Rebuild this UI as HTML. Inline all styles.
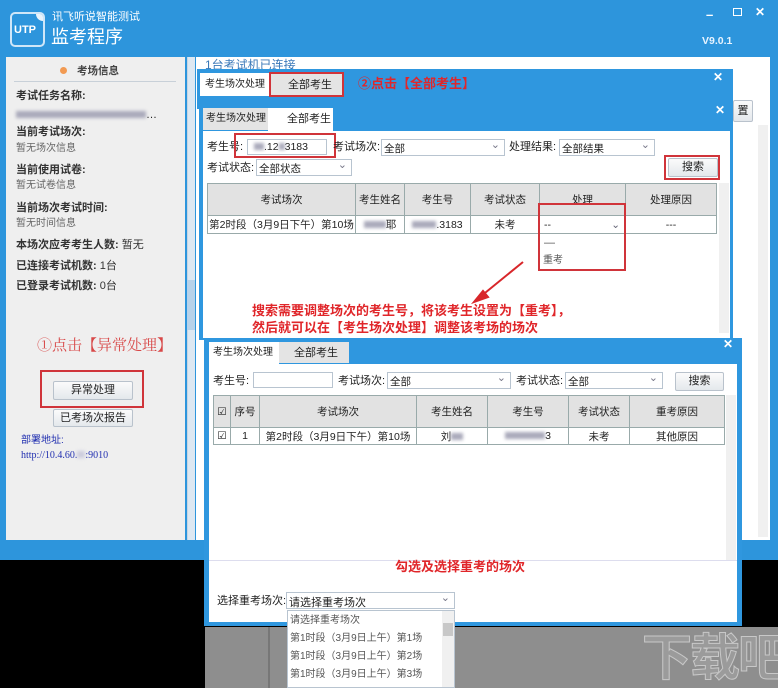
<!DOCTYPE html>
<html><head><meta charset="utf-8"><style>
*{margin:0;padding:0;box-sizing:border-box}
body{width:778px;height:688px;position:relative;overflow:hidden;background:#000;font-family:"Liberation Sans","Noto Sans CJK SC",sans-serif;font-size:11px;color:#222}
.a{position:absolute}
.t{position:absolute;white-space:nowrap;line-height:1}
.inp{position:absolute;background:#fff;border:1px solid #b8c4d0;height:16px}
.sel{position:absolute;background:#fff;border:1px solid #b8c4d0;height:17px;padding:1px 0 0 2px;font-size:10.5px}
.sel:after{content:"⌄";position:absolute;right:4px;top:-2px;color:#778;font-size:11px}
.btn{position:absolute;background:linear-gradient(#fbfbfb,#e4e8ec);border:1px solid #b9c2cc;border-radius:2px;text-align:center;font-size:11px}
.red{position:absolute;border:2px solid #d0343a}
table{border-collapse:collapse;position:absolute;font-size:10.5px}
td{border:1px solid #9aa;text-align:center;white-space:nowrap}
.hd td{background:#e2e2e2}
.rt{color:#e0262a;font-weight:bold;position:absolute;white-space:nowrap;line-height:1}
.blur{display:inline-block;background:#aab;filter:blur(1.5px);height:7px}
.tab{font-size:10px}
</style></head><body>
<!-- main window -->
<div class="a" style="left:0;top:0;width:778px;height:560px;background:#2d95dc"></div>
<div class="a" style="left:10px;top:12px;width:35px;height:35px;border:2px solid #cfe6f8;border-radius:5px"></div>
<div class="t" style="left:14px;top:25px;color:#fff;font-weight:bold;font-size:11px">UTP</div>
<div class="a" style="left:36px;top:14px;width:7px;height:7px;background:#e8f3fc;border-radius:0 3px 0 7px"></div>
<div class="t" style="left:52px;top:12px;color:#fff;font-size:11px">讯飞听说智能测试</div>
<div class="t" style="left:51px;top:28px;color:#fff;font-size:18px">监考程序</div>
<div class="t" style="left:706px;top:8px;color:#fff;font-size:13px;font-weight:bold">–</div>
<div class="a" style="left:733px;top:8px;width:9px;height:8px;border:1.5px solid #fff"></div>
<div class="t" style="left:755px;top:6px;color:#fff;font-size:12px;font-weight:bold">✕</div>
<div class="t" style="left:702px;top:36px;color:#e8f4ff;font-size:10.5px;font-weight:bold">V9.0.1</div>
<!-- left panel -->
<div class="a" style="left:6px;top:57px;width:179px;height:483px;background:#efefef"></div>
<div class="a" style="left:187px;top:57px;width:8px;height:483px;background:#dde8f2;border-left:1px solid #c9d6e2"></div>
<div class="a" style="left:187px;top:280px;width:8px;height:50px;background:#b7d2ea"></div>
<div class="a" style="left:60px;top:67px;width:7px;height:7px;border-radius:50%;background:#f29a52"></div>
<div class="t" style="left:77px;top:66px;font-size:10.5px;font-weight:bold;color:#444">考场信息</div>
<div class="a" style="left:14px;top:81px;width:162px;height:1px;background:#c8d0d8"></div>
<div class="t" style="left:16px;top:91px;font-weight:bold;color:#333">考试任务名称:</div>
<div class="t" style="left:16px;top:110px"><span class="blur" style="width:130px"></span>…</div>
<div class="t" style="left:16px;top:127px;font-weight:bold;color:#333">当前考试场次:</div>
<div class="t" style="left:16px;top:144px;color:#666;font-size:10px">暂无场次信息</div>
<div class="t" style="left:16px;top:165px;font-weight:bold;color:#333">当前使用试卷:</div>
<div class="t" style="left:16px;top:181px;color:#666;font-size:10px">暂无试卷信息</div>
<div class="t" style="left:16px;top:203px;font-weight:bold;color:#333">当前场次考试时间:</div>
<div class="t" style="left:16px;top:219px;color:#666;font-size:10px">暂无时间信息</div>
<div class="t" style="left:16px;top:240px;font-weight:bold;color:#333">本场次应考考生人数: <span style="font-weight:normal">暂无</span></div>
<div class="t" style="left:16px;top:261px;font-weight:bold;color:#333">已连接考试机数: <span style="font-weight:normal">1台</span></div>
<div class="t" style="left:16px;top:281px;font-weight:bold;color:#333">已登录考试机数: <span style="font-weight:normal">0台</span></div>
<div class="t" style="left:37px;top:339px;color:#d84848;font-size:15px;font-family:'Liberation Serif','Noto Serif CJK SC',serif">①点击【异常处理】</div>
<div class="red" style="left:40px;top:370px;width:104px;height:38px"></div>
<div class="btn" style="left:53px;top:381px;width:80px;height:19px;line-height:17px">异常处理</div>
<div class="btn" style="left:53px;top:409px;width:80px;height:18px;line-height:16px">已考场次报告</div>
<div class="t" style="left:21px;top:436px;color:#2230b0;font-size:10px">部署地址:</div>
<div class="t" style="left:21px;top:451px;color:#2230b0;font-size:10px;font-family:'Liberation Serif',serif">http://10.4.60.<span class="blur" style="width:8px;background:#ccd"></span>:9010</div>
<!-- right main -->
<div class="a" style="left:196px;top:57px;width:574px;height:483px;background:#fff"></div>
<div class="a" style="left:758px;top:125px;width:10px;height:412px;background:#f0f0f0"></div>
<div class="t" style="left:205px;top:59px;color:#3a78b8;font-size:12px">1台考试机已连接</div>
<div class="btn" style="left:733px;top:100px;width:20px;height:22px;line-height:20px">置</div>
<!-- below -->
<div class="a" style="left:205px;top:627px;width:573px;height:61px;background:#8e8e8e"></div>
<div class="a" style="left:268px;top:627px;width:2px;height:61px;background:#777"></div>
<div class="t" style="left:642px;top:633px;color:rgba(255,255,255,.12);-webkit-text-stroke:1px #c8c8c8;font-size:50px;font-weight:bold;letter-spacing:-2px">下载吧</div>
<!-- dialog 1 -->
<div class="a" style="left:197px;top:69px;width:536px;height:40px;background:#2f97df"></div>
<div class="a" style="left:200px;top:73px;width:69px;height:23px;background:#fff"></div>
<div class="t tab" style="left:205px;top:80px">考生场次处理</div>
<div class="a" style="left:269px;top:73px;width:74px;height:23px;background:#e4e4e4"></div>
<div class="t" style="left:288px;top:80px">全部考生</div>
<div class="red" style="left:269px;top:72px;width:75px;height:25px"></div>
<div class="rt" style="left:358px;top:77px;font-size:13px">②点击【全部考生】</div>
<div class="t" style="left:713px;top:71px;color:#fff;font-size:12px;font-weight:bold">✕</div>
<!-- dialog 2 -->
<div class="a" style="left:199px;top:102px;width:534px;height:238px;background:#2f97df"></div>
<div class="a" style="left:203px;top:131px;width:527px;height:207px;background:#fff"></div>
<div class="a" style="left:203px;top:108px;width:65px;height:22px;background:#e4e4e4"></div>
<div class="t tab" style="left:206px;top:114px">考生场次处理</div>
<div class="a" style="left:268px;top:108px;width:65px;height:23px;background:#fff"></div>
<div class="t" style="left:287px;top:114px">全部考生</div>
<div class="t" style="left:715px;top:104px;color:#fff;font-size:12px;font-weight:bold">✕</div>
<div class="t" style="left:207px;top:142px">考生号:</div>
<div class="inp" style="left:247px;top:139px;width:80px;font-size:10.5px;padding-left:6px;line-height:14px"><span class="blur" style="width:10px"></span>.12<span class="blur" style="width:6px"></span>3183</div>
<div class="red" style="left:234px;top:133px;width:102px;height:25px"></div>
<div class="t" style="left:333px;top:142px">考试场次:</div>
<div class="sel" style="left:381px;top:139px;width:124px">全部</div>
<div class="t" style="left:509px;top:142px">处理结果:</div>
<div class="sel" style="left:559px;top:139px;width:96px">全部结果</div>
<div class="t" style="left:207px;top:163px">考试状态:</div>
<div class="sel" style="left:256px;top:159px;width:96px">全部状态</div>
<div class="btn" style="left:668px;top:158px;width:50px;height:19px;line-height:17px">搜索</div>
<div class="red" style="left:664px;top:155px;width:56px;height:25px"></div>
<table style="left:207px;top:183px;width:510px">
<tr class="hd" style="height:32px"><td style="width:148px">考试场次</td><td style="width:49px">考生姓名</td><td style="width:66px">考生号</td><td style="width:69px">考试状态</td><td style="width:86px">处理</td><td>处理原因</td></tr>
<tr style="height:18px"><td>第2时段（3月9日下午）第10场</td><td><span class="blur" style="width:22px"></span>耶</td><td><span class="blur" style="width:24px"></span>.3183</td><td>未考</td><td style="text-align:left;padding-left:4px;position:relative">--<span style="position:absolute;right:5px;color:#667">⌄</span></td><td>---</td></tr>
</table>
<div class="a" style="left:719px;top:183px;width:10px;height:150px;background:#f0f0f0"></div>
<div class="t" style="left:544px;top:238px;color:#555">—</div>
<div class="t" style="left:543px;top:256px;color:#555;font-size:10px">重考</div>
<div class="red" style="left:538px;top:203px;width:88px;height:68px"></div>
<svg class="a" style="left:0;top:0" width="778" height="688"><g stroke="#d8262a" stroke-width="2" fill="#d8262a">
<line x1="523" y1="262" x2="480" y2="297"/><polygon points="474,302 483,291 488,297"/>
<line x1="232" y1="456" x2="281" y2="580"/><polygon points="285,590 276,578 285,575"/></g>
<circle cx="222" cy="437" r="12" fill="none" stroke="#d8262a" stroke-width="1.5"/></svg>
<div class="rt" style="left:252px;top:304px;font-size:13px">搜索需要调整场次的考生号，将该考生设置为【重考】，</div>
<div class="rt" style="left:252px;top:321px;font-size:13px">然后就可以在【考生场次处理】调整该考场的场次</div>
<!-- dialog 3 -->
<div class="a" style="left:204px;top:338px;width:538px;height:288px;background:#2f97df"></div>
<div class="a" style="left:209px;top:364px;width:528px;height:258px;background:#fff"></div>
<div class="a" style="left:209px;top:342px;width:70px;height:22px;background:#fff"></div>
<div class="t tab" style="left:213px;top:348px">考生场次处理</div>
<div class="a" style="left:279px;top:342px;width:70px;height:21px;background:#e4e4e4"></div>
<div class="t" style="left:294px;top:348px">全部考生</div>
<div class="t" style="left:723px;top:338px;color:#fff;font-size:12px;font-weight:bold">✕</div>
<div class="t" style="left:213px;top:376px">考生号:</div>
<div class="inp" style="left:253px;top:372px;width:80px"></div>
<div class="t" style="left:338px;top:376px">考试场次:</div>
<div class="sel" style="left:387px;top:372px;width:124px">全部</div>
<div class="t" style="left:516px;top:376px">考试状态:</div>
<div class="sel" style="left:565px;top:372px;width:98px">全部</div>
<div class="btn" style="left:675px;top:372px;width:49px;height:19px;line-height:17px">搜索</div>
<table style="left:213px;top:395px;width:512px">
<tr class="hd" style="height:32px"><td style="width:17px">☑</td><td style="width:29px">序号</td><td style="width:157px">考试场次</td><td style="width:71px">考生姓名</td><td style="width:81px">考生号</td><td style="width:61px">考试状态</td><td>重考原因</td></tr>
<tr style="height:17px"><td>☑</td><td>1</td><td>第2时段（3月9日下午）第10场</td><td>刘<span class="blur" style="width:12px"></span></td><td><span class="blur" style="width:40px"></span>3</td><td>未考</td><td>其他原因</td></tr>
</table>
<div class="a" style="left:726px;top:395px;width:10px;height:165px;background:#f0f0f0"></div>
<div class="a" style="left:209px;top:560px;width:528px;height:1px;background:#dde"></div>
<div class="rt" style="left:395px;top:560px;font-size:13px">勾选及选择重考的场次</div>
<div class="t" style="left:217px;top:596px">选择重考场次:</div>
<div class="sel" style="left:286px;top:592px;width:169px;font-size:11px">请选择重考场次</div>
<div class="a" style="left:287px;top:610px;width:168px;height:78px;background:#fff;border:1px solid #b8c4d0;font-size:10px;color:#555;line-height:18px;padding:1px 0 0 2px">请选择重考场次<br>第1时段（3月9日上午）第1场<br>第1时段（3月9日上午）第2场<br>第1时段（3月9日上午）第3场</div>
<div class="a" style="left:442px;top:611px;width:12px;height:76px;background:#f0f0f0"></div>
<div class="a" style="left:443px;top:623px;width:10px;height:13px;background:#c8c8c8"></div>
</body></html>
